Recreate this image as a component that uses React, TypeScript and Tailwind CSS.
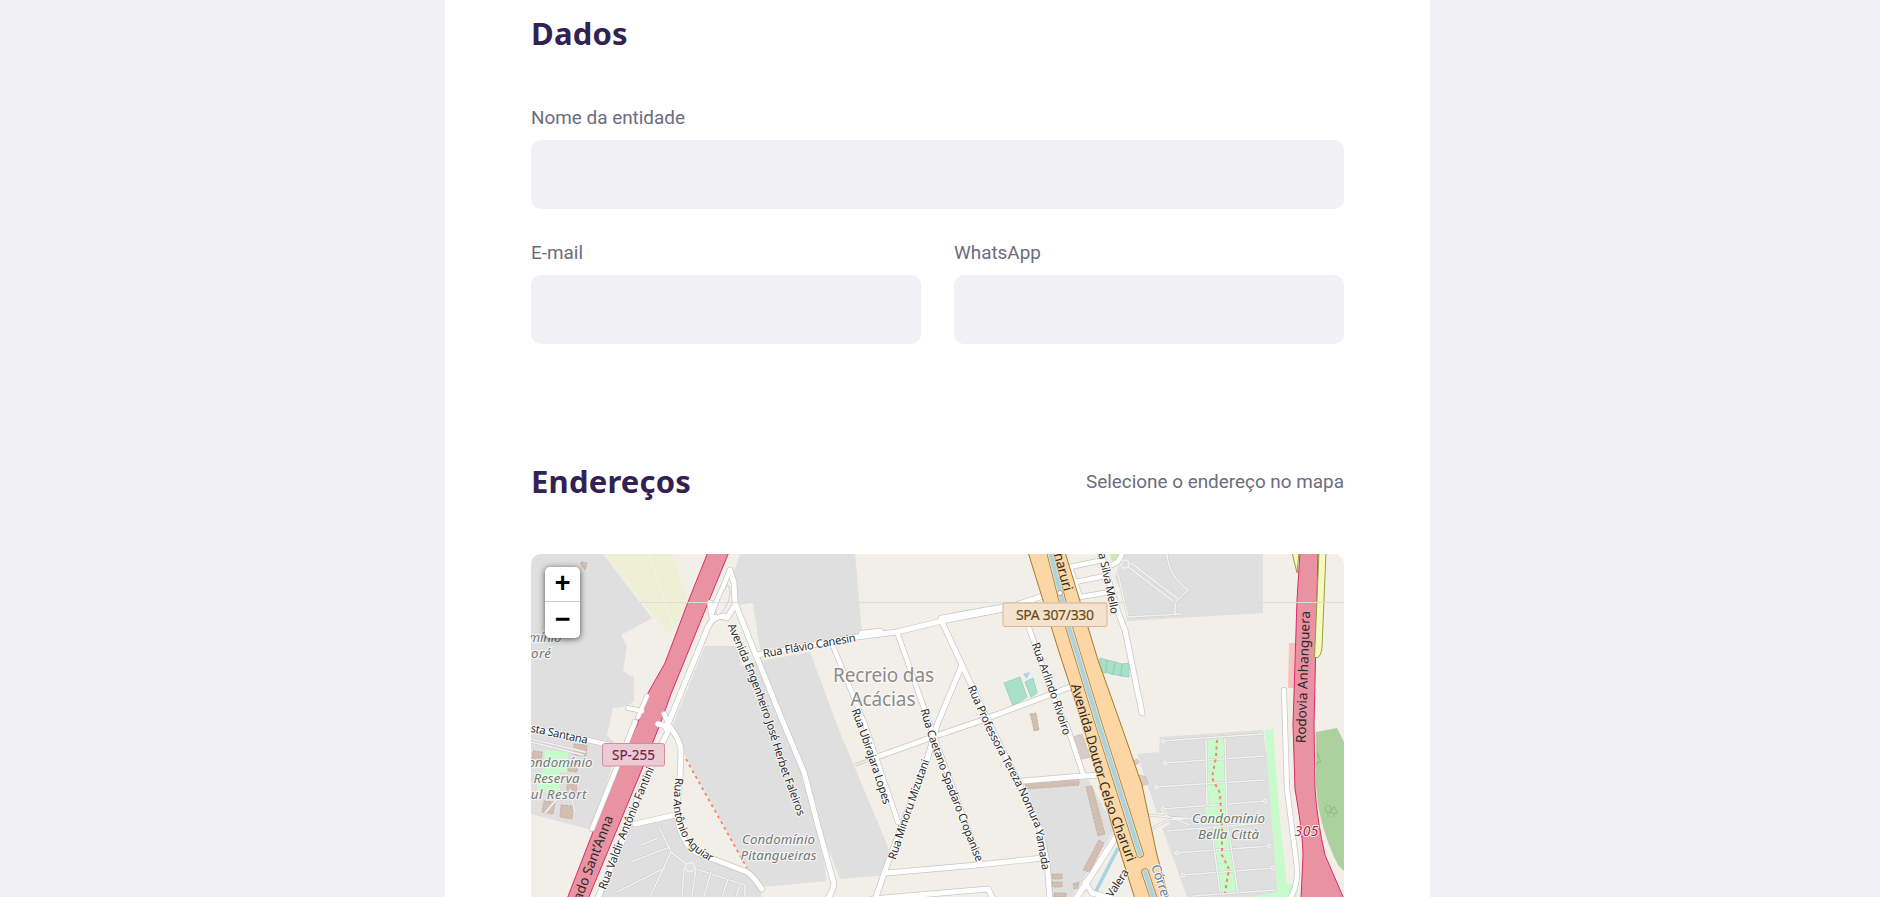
const streets: { d: string; w: number }[] = [
  // around the SP-255 junction
  { d: 'M730 570 L734 583 L735 603 L755 653 L783 722 L804 772 L818 826 L833 880 Q836 886 827 900', w: 5 },
  { d: 'M730 570 L722 589 L711 615', w: 4.5 },
  { d: 'M735 605 L727 618 Q716 612 708 627 L675 707 L666 729', w: 5 },
  { d: 'M710 603 L712 618 L724 616', w: 5 },
  { d: 'M647 696 L638 717', w: 4 },
  { d: 'M628 708 L642 711', w: 4 },
  { d: 'M635 722 L592 829', w: 4.5 },
  { d: 'M664 714 L670 727', w: 4.5 },
  { d: 'M670 727 L642 785 L625 835 L597 900', w: 5 },
  { d: 'M658 724 L670 727 Q680 740 681 750 L680 779 Q675 815 679 825 Q685 848 700 854 L747 872 Q753 876 762 889', w: 5 },
  { d: 'M635 824 L675 815', w: 5 },
  { d: 'M528 727 L588 740 L618 747', w: 4.5 },
  // Recreio das Acácias
  { d: 'M757 655 L857 637 L897 632 L942 621 L1003 609 L1043 596', w: 5 },
  { d: 'M942 619 L1003 608', w: 7 },
  { d: 'M862 634 L880 632', w: 6.5 },
  { d: 'M833 646 L865 725 L898 822', w: 4.5 },
  { d: 'M897 632 L935 739 L980 862', w: 4.5 },
  { d: 'M942 622 L962 665 L990 725 L1020 785 L1040 829 L1047 862 L1050 900', w: 5 },
  { d: 'M962 665 L937 725 L927 760 L887 865 L875 900', w: 5 },
  { d: 'M877 757 L930 738 L977 722 L1073 686', w: 5 },
  { d: 'M887 873 L977 865 L1043 858', w: 5 },
  { d: 'M872 899 L988 889 L994 900', w: 5 },
  { d: 'M1028 625 L1057 707 L1067 726 L1083 774', w: 4.5 },
  { d: 'M1023 781 L1070 777 L1100 775', w: 5 },
  { d: 'M1119 832 L1085 885 L1075 900', w: 5.5 },
  { d: 'M1085 882 L1092 893 L1110 898', w: 5 },
  // east side
  { d: 'M1070 567 L1103 560 M1075 582 L1105 576 M1080 597 L1110 592 M1070 567 L1080 597', w: 4.5 },
  { d: 'M1100 552 L1118 612 L1125 630 L1142 713', w: 5 },
  { d: 'M1122 552 Q1121 563 1109 566', w: 4.5 },
  { d: 'M1284 690 L1285 725 L1287 789 L1296 860 Q1300 884 1289 900', w: 4.5 },
];

const lanes: string[] = [
  'M641 845 L658 838 M631 862 L670 847 M617 892 L665 868 M659 827 L671 852 L650 897 M671 852 L690 867 L745 885 L745 897',
  'M684 868 L682 897 M696 868 L692 897 M711 872 L704 897 M728 879 L722 897 M740 885 L736 897',
  'M531 739 L585 752 M531 742 L583 755 M531 760 L540 761 M568 765 L580 767 M556 800 L545 813 M570 790 L575 812',
  'M1127 566 L1173 601 M1131 563 L1177 598 M1167 554 Q1168 575 1188 590 L1175 602 L1175 615 M1128 617 L1182 614 M1118 574 L1128 617',
  'M1161 741 L1263 734 M1164 763 L1264 756 M1154 787 L1265 780 M1161 809 L1267 801 M1167 831 L1265 823 M1174 853 L1271 846 M1182 875 L1275 868 M1193 896 L1275 890',
  'M1206 739 L1207 805 M1225 738 L1227 820 L1238 893 M1213 839 L1220 893',
  'M1147 815 L1205 820 M1150 830 L1168 820 M1165 815 L1190 825 M1168 820 L1195 818',
];

const buildings: string[] = [
  'M533 751 l9 1 l-1 11 l-9 -1z M574 744 l13 1 l-1 11 l-12 -1z M568 762 l10 1 l-1 9 l-9 -1z M567 784 l10 1 l-1 9 l-9 -1z',
  'M544 801 l11 1 l-2 12 l-11 -2z M561 805 l12 1 l-1 13 l-12 -2z',
  'M1025 783 L1079 779 L1079 785 L1026 789z M1086 787 L1092 786 L1105 834 L1098 836z M1099 840 L1104 843 L1090 872 L1083 870z',
  'M1030 714 l6 -1 l3 17 l-5 1 l-2 -10z M1052 874 h10 v5 h-10z M1052 882 h10 v5 h-10z M1054 893 h12 v4 h-12z',
  'M581 562 l6 1 l-2 7 l-4 -5z M1073 884 l6 -2 l-1 6 l-4 1z',
];

type Road = { id: string; d: string; text: string; size: number; len: number; fill?: string; halo?: string };

const roadNames: Road[] = [
  { id: 'engenheiro', d: 'M731 624 L752 673 L771 726 L783 765 L804 822', text: 'Avenida Engenheiro José Herbet Faleiros', size: 11.3, len: 204 },
  { id: 'canesin', d: 'M763 654 L870 635', text: 'Rua Flávio Canesin', size: 11.3, len: 94 },
  { id: 'ubirajara', d: 'M855 709 L868 745 L895 827', text: 'Rua Ubirajara Lopes', size: 11.3, len: 100 },
  { id: 'caetano', d: 'M924 709 L933 739 L950 785 L984 872', text: 'Rua Caetano Spadaro Cropanise', size: 11.3, len: 162 },
  { id: 'professora', d: 'M971 686 L990 729 L1020 785 L1038 825 L1048 880', text: 'Rua Professora Tereza Nomura Yamada', size: 11.3, len: 200 },
  { id: 'minoru', d: 'M892 859 L904 822 L930 748', text: 'Rua Minoru Mizutani', size: 11.3, len: 105 },
  { id: 'arlindo', d: 'M1035 643 L1057 703 L1072 750', text: 'Rua Arlindo Rivoiro', size: 11.3, len: 97 },
  { id: 'fantini', d: 'M602 889 L625 829 L657 753', text: 'Rua Valdir Antônio Fantini', size: 11.3, len: 131 },
  { id: 'aguiar', d: 'M679 778 L677 805 Q680 832 694 846 Q704 855 722 863', text: 'Rua Antônio Aguiar', size: 11.3, len: 95 },
  { id: 'santana', d: 'M531 728 L600 743', text: 'sta Santana', size: 11.3, len: 58 },
  { id: 'mello', d: 'M1102 553 L1109 585 L1117 625', text: 'a Silva Mello', size: 11.3, len: 62 },
  { id: 'valera', d: 'M1109 896 L1131 863', text: 'Valera', size: 11.3, len: 31 },
  { id: 'charuri', d: 'M1075 684 L1087 725 L1108 799 L1136 872', text: 'Avenida Doutor Celso Charuri', size: 13.5, len: 186, halo: '#fcd6a4' },
  { id: 'charuri2', d: 'M1058 553 L1072 605', text: 'haruri', size: 13.5, len: 39, halo: '#fcd6a4' },
  { id: 'santanna', d: 'M577 900 L613 806', text: 'ado Sant’Anna', size: 13.5, len: 90, halo: '#e892a2' },
  { id: 'anhanguera', d: 'M1301 743 L1306 600', text: 'Rodovia Anhanguera', size: 13.5, len: 132, halo: '#e892a2' },
  { id: 'corrego', d: 'M1155 865 L1172 915', text: 'Córrego', size: 13, len: 48, fill: '#5b86b8' },
];

const places: { x: number; y: number; text: string; size: number; fill: string; italic: boolean; len: number }[] = [
  { x: 883.5, y: 682, text: 'Recreio das', size: 19, fill: '#8b8b8b', italic: false, len: 101 },
  { x: 883, y: 706, text: 'Acácias', size: 19, fill: '#8b8b8b', italic: false, len: 65 },
  { x: 778.5, y: 843.5, text: 'Condomínio', size: 13.3, fill: '#777', italic: true, len: 73 },
  { x: 778.5, y: 859.5, text: 'Pitangueiras', size: 13.3, fill: '#777', italic: true, len: 76 },
  { x: 1228.5, y: 823, text: 'Condomínio', size: 13.3, fill: '#6d756d', italic: true, len: 73 },
  { x: 1228.5, y: 839, text: 'Bella Città', size: 13.3, fill: '#6d756d', italic: true, len: 61 },
  { x: 556, y: 766.5, text: 'Condomínio', size: 13.3, fill: '#777', italic: true, len: 73 },
  { x: 556.5, y: 783, text: 'Reserva', size: 13.3, fill: '#777', italic: true, len: 46 },
  { x: 555, y: 799, text: 'Sul Resort', size: 13.3, fill: '#777', italic: true, len: 63 },
  { x: 545, y: 642, text: 'mínio', size: 13.3, fill: '#777', italic: true, len: 33 },
  { x: 541, y: 657.5, text: 'oré', size: 13.3, fill: '#777', italic: true, len: 20 },
];

function MapCanvas() {
  return (
    <svg viewBox="531 554 813 343" className="block h-[343px] w-[813px] font-['Noto_Sans',sans-serif]">
      <rect x="531" y="554" width="813" height="343" fill="#f2efe9" />

      {/* residential areas */}
      <g fill="#dfdfdf">
        <path d="M531 554 H603 L652 618 L621 635 L627 646 L623 671 Q628 675 634 677 L634 700 Q630 707 613 708 L607 735 L618 747 L592 830 L531 814Z" />
        <path d="M740 554 H855 L862 634 L760 650 L753 603 L738 605 L733 575Z" />
        <path d="M705 646 H737 L741 666 L755 662 L810 652 L837 725 L888 847 L887 875 L840 879 L820 829 L827 881 L765 887 L748 869 L687 759 L672 727Z" />
        <path d="M628 827 L675 817 L685 845 L715 862 L745 872 L762 892 V897 H600Z" />
        <path d="M1123 554 H1263 V613 L1127 621 L1126 603 L1115 577Z" />
        <path d="M1137 754 L1159 752 L1160 737 L1263 730 L1287 897 H1187 L1160 822Z" />
        <path d="M1026 785 L1088 779 L1115 829 L1072 897 H1051 L1046 850Z" />
      </g>
      <path d="M820 829 L840 879 L827 884Z" fill="#f2efe9" />
      <path d="M1147 815 L1167 812 L1170 824 L1156 832Z" fill="#f2efe9" />
      <path d="M603 554 H672 L688 602 L670 636Z" fill="#eef0d5" />
      <path d="M649 554 L673 625" stroke="#f3f4e2" fill="none" />

      {/* parks, woods and pitches */}
      <g fill="#c8facc">
        <path d="M1265 730 L1273 729 L1280 822 L1287 884 H1297 V897 H1250 L1277 892Z" />
        <path d="M1207 739 L1224 737 L1226 819 L1230 849 L1238 893 H1220 L1213 839 L1215 822 L1205 815Z" />
        <path d="M545 750 L568 752 V772 H560 V792 H537 L538 772 H543Z" />
      </g>
      <path d="M1316 732 L1337 728 L1344 742 V871 L1338 865 Q1318 825 1316 785Z" fill="#add19e" />
      <g fill="none" stroke="#8dbb80">
        <ellipse cx="1328" cy="809" rx="3" ry="3.500" />
        <path d="M1328 813 V817 M1334 806 L1330.500 813 H1337.500Z M1334 813 V817" />
        <path d="M1317 753 L1321 762 H1317 V765" />
      </g>
      <path d="M1110 554 H1120 L1116 560 L1112 562Z" fill="#cdebb0" />
      <g fill="#aae0cb" stroke="#8ccfb4" strokeWidth=".8">
        <path d="M1004 683 L1020 677 L1027 697 L1013 706Z" />
        <path d="M1025 682 L1033 678 L1037 693 L1031 697Z" />
        <path d="M1100 658 L1107 660 L1106 673 L1099 671Z M1107 660 L1115 662 L1113 675 L1106 672Z M1115 662 L1122 664 L1121 676 L1113 674Z M1122 664 L1129 663 L1129 677 L1121 676Z" />
      </g>
      <path d="M1023 674 L1030 672 L1027 679Z" fill="#b0d4e6" />
      <path d="M1289 643 H1295 L1294 688 H1288Z" fill="#f6c3c0" />
      <g fill="#d6cdc7" stroke="#c9bab0" strokeWidth=".7">
        <path d="M1073 737 L1082 734 L1090 757 L1078 760Z M1130 763 L1137 759 L1139 763 L1132 766Z M1135 777 L1140 775 L1146 777 L1148 784 L1138 787Z" />
      </g>
      {buildings.map((d) => (
        <path key={d} d={d} fill="#d3bfb2" stroke="#c2a898" strokeWidth=".8" strokeDasharray="3 1" />
      ))}

      {/* service lanes */}
      {lanes.map((d) => (
        <g key={d} fill="none" strokeLinecap="round">
          <path d={d} stroke="#cbcbcb" strokeWidth="2.6" />
          <path d={d} stroke="#f2f2f2" strokeWidth="1.6" />
        </g>
      ))}
      <circle cx="1125" cy="564" r="4" fill="#dfdfdf" stroke="#f2f2f2" strokeWidth="1.5" />
      <circle cx="690" cy="867" r="4.500" fill="#dfdfdf" stroke="#f2f2f2" strokeWidth="1.5" />
      <g fill="#dfdfdf" stroke="#f5f5f5">
        <circle cx="1163" cy="741" r="1.800" />
        <circle cx="1165" cy="763" r="1.800" />
        <circle cx="1156" cy="787" r="1.800" />
        <circle cx="1163" cy="809" r="1.800" />
        <circle cx="1177" cy="853" r="1.800" />
        <circle cx="1183" cy="875" r="1.800" />
        <circle cx="1265" cy="801" r="1.800" />
        <circle cx="1269" cy="846" r="1.800" />
        <circle cx="1273" cy="868" r="1.800" />
      </g>
      <path d="M855 765 L877 757" stroke="#c4c4c4" strokeWidth="3" />
      <path d="M855 765 L877 757" stroke="#eeedea" strokeWidth="1.800" />

      {/* footpaths */}
      <g fill="none" stroke="#fa8072" strokeDasharray="3 3.500">
        <path d="M686 759 L747 868" strokeWidth="1.800" />
        <path d="M1217 740 L1216 757 L1212 778 L1220 793 L1222 830 L1222 855 L1229 869 L1225 893" strokeWidth="2" />
      </g>

      <path d="M1118 848 L1095 893" stroke="#aad3df" strokeWidth="3.500" />

      {/* motorways */}
      <g stroke="#dc2a67" strokeWidth="1">
        <path d="M708 552 L688 602 L665 663 L648 693 L637 725 L619 765 L567 899 H588 L638 779 L659 727 L671 694 L708 603 L729 552Z" fill="#e892a2" />
        <path d="M1300 552 L1297 600 L1293 725 L1295 789 Q1303 835 1303 855 L1301 899 H1344 L1325 855 Q1317 820 1315 789 L1314 725 L1318 552Z" fill="#e892a2" />
      </g>
      <g fill="#f7fabf" stroke="#96a03c" strokeWidth="1">
        <path d="M1319 552 H1326 L1322 647 Q1321 657 1317 657.500 H1314.500Z" />
        <path d="M1292 552 H1299 L1297 573Z" />
      </g>

      {/* minor streets */}
      <g fill="none" stroke="#c6c6c6" strokeLinecap="round" strokeLinejoin="round">
        {streets.map((s) => (
          <path key={s.d} d={s.d} strokeWidth={s.w + 1.4} />
        ))}
      </g>
      <g fill="none" stroke="#fff" strokeLinecap="round" strokeLinejoin="round">
        {streets.map((s) => (
          <path key={s.d} d={s.d} strokeWidth={s.w} />
        ))}
      </g>
      <path d="M728 585 Q732 592 728 602 Q722 615 717 615 Q714 613 719 602 Q724 588 728 585Z" fill="#f2efe9" stroke="#c6c6c6" strokeWidth=".8" />

      {/* divided avenue with the stream in its median */}
      <path d="M1028 552 L1060 655 L1082 722 L1113 829 L1135 899 H1169 L1157 855 L1142 785 L1120 722 L1098 660 L1065 552Z" fill="#fcd6a4" stroke="#a9792a" strokeWidth="1" />
      <g fill="none" strokeLinecap="round">
        <path d="M1049 548 L1069 627 L1098 722 L1140 854 M1145 872 L1156 905" stroke="#a9792a" strokeWidth="7.5" />
        <path d="M1049 548 L1069 627 L1098 722 L1140 854 M1145 872 L1156 905" stroke="#e6e2d0" strokeWidth="6" />
        <path d="M1049 548 L1069 627 L1098 722 L1140 854 M1145 872 L1156 905" stroke="#aad3df" strokeWidth="4" />
      </g>
      <circle cx="1060" cy="593" r="2.500" fill="#fff" stroke="#b58a8a" strokeWidth=".8" />

      <path d="M640 602.500 H1344" stroke="#dcdcdc" />

      {/* labels */}
      {roadNames.map((r) => (
        <g key={r.id}>
          <path id={r.id} d={r.d} fill="none" />
          <text
            dy=".33em"
            fontSize={r.size}
            fill={r.fill ?? '#2b2b2b'}
            stroke={r.halo ?? '#fff'}
            strokeOpacity=".75"
            strokeWidth="2"
            strokeLinejoin="round"
            paintOrder="stroke"
          >
            <textPath href={`#${r.id}`} textLength={r.len}>
              {r.text}
            </textPath>
          </text>
        </g>
      ))}
      {places.map((p) => (
        <text
          key={`${p.text}${p.x}`}
          x={p.x}
          y={p.y}
          textAnchor="middle"
          textLength={p.len}
          fontSize={p.size}
          fontStyle={p.italic ? 'italic' : 'normal'}
          fill={p.fill}
          stroke="#fff"
          strokeOpacity=".6"
          strokeWidth="2.500"
          strokeLinejoin="round"
          paintOrder="stroke"
        >
          {p.text}
        </text>
      ))}
      <text x="1306.500" y="836" textAnchor="middle" textLength="24" fontSize="14" fontStyle="italic" fill="#b02a44" stroke="#fff" strokeOpacity=".8" strokeWidth="2" paintOrder="stroke">
        305
      </text>

      <rect x="602.500" y="743.500" width="62" height="22.500" rx="2" fill="#eccad3" stroke="#d58b9b" />
      <text x="633.500" y="759.500" textAnchor="middle" textLength="43" fontSize="13.500" fill="#7b2150" stroke="#7b2150" strokeWidth=".2">
        SP-255
      </text>
      <rect x="1003" y="603" width="104" height="23.500" rx="2" fill="#f4e2cf" stroke="#d9b58c" />
      <text x="1055" y="620" textAnchor="middle" textLength="78" fontSize="14" fill="#6d4e12" stroke="#6d4e12" strokeWidth=".2">
        SPA 307/330
      </text>
    </svg>
  );
}

function Field({ label }: { label: string }) {
  return (
    <label className="flex flex-1 flex-col">
      <span className="mb-[11px] h-[23px] text-[18.9px] leading-[23px] text-[#6c6c80]">{label}</span>
      <input className="h-[69px] w-full rounded-[10px] bg-[#f0f0f5] px-6 outline-none" />
    </label>
  );
}

function Heading({ children }: { children: string }) {
  return (
    <h2 className="font-['Noto_Sans',sans-serif] text-[31px] leading-[40px] font-bold tracking-[0.2px] text-[#322153]">{children}</h2>
  );
}

export default function App() {
  return (
    <div className="h-[897px] overflow-hidden bg-[#f0f0f5] pl-[445px] font-['Roboto',sans-serif]">
      <form className="h-full w-[985px] bg-white px-[86px] pt-[13px]">
        <section>
          <Heading>Dados</Heading>
          <div className="mt-[53px] flex">
            <Field label="Nome da entidade" />
          </div>
          <div className="mt-[32px] flex gap-[33px]">
            <Field label="E-mail" />
            <Field label="WhatsApp" />
          </div>
        </section>
        <section className="mt-[117px]">
          <div className="flex items-center justify-between">
            <Heading>Endereços</Heading>
            <span className="text-[18.9px] leading-[23px] text-[#6c6c80]">Selecione o endereço no mapa</span>
          </div>
          <div className="relative mt-[53px] h-[343px] overflow-hidden rounded-t-[10px]">
            <MapCanvas />
            <div className="absolute top-[13px] left-[14px] flex w-[35px] flex-col rounded-[5px] bg-white font-['Liberation_Mono',monospace] text-[27px] leading-none font-bold text-black shadow-[0_1px_6px_rgba(0,0,0,0.65)]">
              <button type="button" className="flex h-[35px] items-center justify-center border-b border-[#ccc] pt-[3px]">
                +
              </button>
              <button type="button" className="flex h-[36px] items-center justify-center pt-[3px]">
                −
              </button>
            </div>
          </div>
        </section>
      </form>
    </div>
  );
}
